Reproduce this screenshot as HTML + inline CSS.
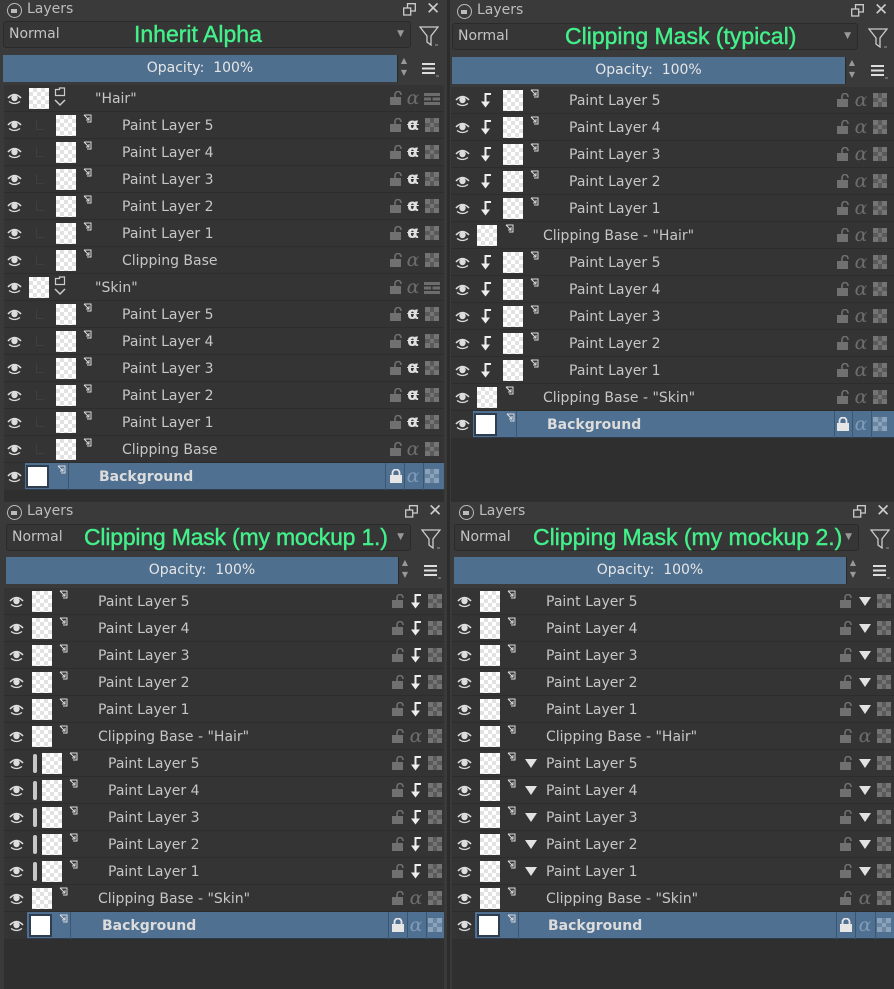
<!DOCTYPE html>
<html><head><meta charset="utf-8"><style>
*{box-sizing:border-box;margin:0;padding:0}
body{width:894px;height:989px;background:#2c2c2c;overflow:hidden;font-family:"DejaVu Sans","Liberation Sans",sans-serif;position:relative}
.p{position:absolute;background:#3a3a3a;overflow:hidden}
.hd{position:absolute;left:0;right:0;top:0;height:21px;color:#bdbdbd;font-size:14px}
.hd .lc{position:absolute;left:7px;top:3px;width:15px;height:15px;border:1.5px solid #bbb;border-radius:50%}
.hd .lc:after{content:"";position:absolute;left:3px;top:5px;width:6px;height:4px;background:#bbb}
.hd .ln{position:absolute;left:27px;top:1px}
.hd .fl{position:absolute;top:3px;width:13px;height:13px}
.hd .x{position:absolute;top:-1px;font-size:17px;color:#ccc}
.cb{position:absolute;height:27px;background:#363636;border:1px solid #2a2a2a;border-radius:3px;color:#c4c4c4;font-size:14px;line-height:25px;padding-left:5px}
.cb .dd{position:absolute;right:6px;top:0;font-size:9px;color:#999}
.gt{position:absolute;color:#43f08a;font-family:"Liberation Sans",sans-serif;font-size:23px;line-height:25px;top:0;-webkit-text-stroke:0.4px #43f08a}
.op{position:absolute;height:27px;background:#4f6f8f;color:#e6e6e6;font-size:14px;line-height:27px;text-align:center}
.sp{position:absolute;height:27px;width:13px;background:#3a3a3a;border-left:1px solid #2a2a2a;color:#999;font-size:8px;line-height:12px;text-align:center}
.ic{position:absolute;color:#ccc}
.ls{position:absolute;background:#2f2f2f}
.r{position:absolute;left:0;right:0;height:27px;background:#343434;border-bottom:1px solid #2d2d2d}
.r>*{position:absolute}
.e{top:7px;width:15px;height:13px}
.th{top:3px;width:20px;height:21px;background-color:#fff;background-image:linear-gradient(45deg,#e2e2e2 25%,transparent 25%,transparent 75%,#e2e2e2 75%),linear-gradient(45deg,#e2e2e2 25%,transparent 25%,transparent 75%,#e2e2e2 75%);background-size:8px 8px;background-position:0 0,4px 4px}
.cl{top:2px;width:10px;height:10px}
.tx{top:1px;line-height:26px;font-size:14px;color:#c6c6c6;white-space:nowrap}
.lk{top:6px;width:12px;height:14px}
.al{top:0;width:16px;line-height:26px;font-size:19px;font-style:italic;color:#6d6d6d;font-family:"DejaVu Serif",serif;text-align:center}
.ax{top:0;width:16px;line-height:26px;font-size:17px;font-weight:bold;color:#e0e0e0;text-align:center;text-decoration:line-through}
.ck{top:6px;width:14px;height:14px}
.hk{top:5px;width:12px;height:16px}
.tri{top:9px;width:12px;height:9px}
.fb{top:8px;width:8px;height:10px;border-left:1px solid #3f3f3f;border-bottom:1px solid #3f3f3f}
.bar{top:4px;width:4px;height:19px;background:#c8c8c8;border-radius:2px}
.sel{background:#4f7091;border-bottom-color:#2d3d4d}
.sel .tx{font-weight:bold;color:#dcdcdc}
.wt{top:2px;width:23px;height:23px;background:#fff;border:2px solid #2e3e50}
.dv{top:0;width:1px;height:27px;background:#3a5670}
.ebg{left:0;top:0;height:27px;background:#343434}
</style></head><body>
<svg width="0" height="0" style="position:absolute"><defs>
<symbol id="eye" viewBox="0 0 15 13"><path d="M1 6 Q7.5 -1 14 6" stroke="#ddd" stroke-width="1.6" fill="none"/><circle cx="7.5" cy="6" r="3.2" fill="#ddd"/><path d="M2 9.5 Q7.5 13.5 13 9.5" stroke="#ddd" stroke-width="1.3" fill="none"/></symbol>
<symbol id="clip" viewBox="0 0 10 10"><path d="M2 1H9V8H5M2 1L7 6M7 3V6H4" stroke="#ddd" stroke-width="1" fill="none"/></symbol>
<symbol id="lock" viewBox="0 0 12 14"><rect x="0" y="6" width="11" height="8" fill="#707070"/><path d="M5 6V3.5A3 3 0 0 1 11 3.5V4" stroke="#707070" stroke-width="1.6" fill="none"/></symbol>
<symbol id="lockc" viewBox="0 0 12 14"><rect x="0" y="6" width="12" height="8" fill="#e6e6e6"/><path d="M2.5 6V4A3.5 3.5 0 0 1 9.5 4V6" stroke="#e6e6e6" stroke-width="1.8" fill="none"/></symbol>
<symbol id="chk" viewBox="0 0 14 14"><rect width="14" height="14" fill="#5a5a5a"/><path d="M0 0h5v5H0zM9 0h5v5H9zM5 5h4v4H5zM0 9h5v5H0zM9 9h5v5H9z" fill="#747474"/></symbol>
<symbol id="chks" viewBox="0 0 14 14"><rect width="14" height="14" fill="#6a86a3"/><path d="M0 0h5v5H0zM9 0h5v5H9zM5 5h4v4H5zM0 9h5v5H0zM9 9h5v5H9z" fill="#8aa2ba"/></symbol>
<symbol id="grid" viewBox="0 0 16 12"><path d="M0 0h16v3H0zM0 4.5h7v3H0zM8.5 4.5h7.5v3H8.5zM0 9h16v3H0z" fill="#6d6d6d"/></symbol>
<symbol id="hook" viewBox="0 0 12 16"><path d="M11 2H5.5V11" stroke="#eee" stroke-width="2" fill="none"/><path d="M1 9.5H10L5.5 15.5Z" fill="#eee"/></symbol>
<symbol id="tri" viewBox="0 0 12 9"><path d="M0 0H12L6 9Z" fill="#e2e2e2"/></symbol>
<symbol id="grp" viewBox="0 0 12 22"><path d="M1.5 2.5h4v-1.5h5v7.5h-9z" stroke="#ccc" stroke-width="1.2" fill="none"/><path d="M1 13L6 18L11 13" stroke="#ccc" stroke-width="1.5" fill="none"/></symbol>
<symbol id="flt" viewBox="0 0 20 22"><path d="M1 2H19L12 11V20L8 17V11Z" stroke="#ccc" stroke-width="1.3" fill="none"/><path d="M16 20h3" stroke="#999"/></symbol>
<symbol id="mnu" viewBox="0 0 18 16"><path d="M1 3h13M1 7.5h13M1 12h13" stroke="#ddd" stroke-width="2"/><path d="M15 15h3" stroke="#999"/></symbol>
<symbol id="flo" viewBox="0 0 13 13"><rect x="0.7" y="5" width="7" height="7" stroke="#ccc" fill="none" stroke-width="1.3"/><path d="M4.5 5V0.7H12.3V8H7.7" stroke="#ccc" fill="none" stroke-width="1.3"/></symbol>
</defs></svg>

<!-- TOP LEFT -->
<div class="p" style="left:0;top:0;width:447px;height:502px">
<div class="hd"><div class="lc"></div><div class="ln">Layers</div><svg class="fl" style="left:403px"><use href="#flo"/></svg><span class="x" style="left:426px">✕</span></div>
<div class="cb" style="left:3px;top:21px;width:408px">Normal<span class="dd">▼</span><span class="gt" style="left:130px">Inherit Alpha</span></div>
<svg class="ic" style="left:419px;top:25px;width:20px;height:22px"><use href="#flt"/></svg>
<div class="op" style="left:3px;top:55px;width:394px">Opacity:&nbsp; 100%</div><div class="sp" style="left:397px;top:55px">▲<br>▼</div>
<svg class="ic" style="left:421px;top:61px;width:18px;height:16px"><use href="#mnu"/></svg>
<div class="ls" style="left:4px;top:85px;width:440px;height:417px">
<div class="r" style="top:0"><svg class="e" style="left:3px"><use href="#eye"/></svg><div class="th" style="left:25px"></div><svg style="left:50px;top:2px;width:12px;height:22px"><use href="#grp"/></svg><span class="tx" style="left:91px">"Hair"</span><svg class="lk" style="left:386px"><use href="#lock"/></svg><span class="al" style="left:401px">α</span><svg style="left:420px;top:8px;width:16px;height:12px;position:absolute"><use href="#grid"/></svg></div>
<div class="r" style="top:27px"><svg class="e" style="left:3px"><use href="#eye"/></svg><div class="fb" style="left:32px"></div><div class="th" style="left:52px"></div><svg class="cl" style="left:78px"><use href="#clip"/></svg><span class="tx" style="left:118px">Paint Layer 5</span><svg class="lk" style="left:386px"><use href="#lock"/></svg><span class="ax" style="left:401px">α</span><svg class="ck" style="left:421px"><use href="#chk"/></svg></div>
<div class="r" style="top:54px"><svg class="e" style="left:3px"><use href="#eye"/></svg><div class="fb" style="left:32px"></div><div class="th" style="left:52px"></div><svg class="cl" style="left:78px"><use href="#clip"/></svg><span class="tx" style="left:118px">Paint Layer 4</span><svg class="lk" style="left:386px"><use href="#lock"/></svg><span class="ax" style="left:401px">α</span><svg class="ck" style="left:421px"><use href="#chk"/></svg></div>
<div class="r" style="top:81px"><svg class="e" style="left:3px"><use href="#eye"/></svg><div class="fb" style="left:32px"></div><div class="th" style="left:52px"></div><svg class="cl" style="left:78px"><use href="#clip"/></svg><span class="tx" style="left:118px">Paint Layer 3</span><svg class="lk" style="left:386px"><use href="#lock"/></svg><span class="ax" style="left:401px">α</span><svg class="ck" style="left:421px"><use href="#chk"/></svg></div>
<div class="r" style="top:108px"><svg class="e" style="left:3px"><use href="#eye"/></svg><div class="fb" style="left:32px"></div><div class="th" style="left:52px"></div><svg class="cl" style="left:78px"><use href="#clip"/></svg><span class="tx" style="left:118px">Paint Layer 2</span><svg class="lk" style="left:386px"><use href="#lock"/></svg><span class="ax" style="left:401px">α</span><svg class="ck" style="left:421px"><use href="#chk"/></svg></div>
<div class="r" style="top:135px"><svg class="e" style="left:3px"><use href="#eye"/></svg><div class="fb" style="left:32px"></div><div class="th" style="left:52px"></div><svg class="cl" style="left:78px"><use href="#clip"/></svg><span class="tx" style="left:118px">Paint Layer 1</span><svg class="lk" style="left:386px"><use href="#lock"/></svg><span class="ax" style="left:401px">α</span><svg class="ck" style="left:421px"><use href="#chk"/></svg></div>
<div class="r" style="top:162px"><svg class="e" style="left:3px"><use href="#eye"/></svg><div class="fb" style="left:32px"></div><div class="th" style="left:52px"></div><svg class="cl" style="left:78px"><use href="#clip"/></svg><span class="tx" style="left:118px">Clipping Base</span><svg class="lk" style="left:386px"><use href="#lock"/></svg><span class="al" style="left:401px">α</span><svg class="ck" style="left:421px"><use href="#chk"/></svg></div>
<div class="r" style="top:189px"><svg class="e" style="left:3px"><use href="#eye"/></svg><div class="th" style="left:25px"></div><svg style="left:50px;top:2px;width:12px;height:22px"><use href="#grp"/></svg><span class="tx" style="left:91px">"Skin"</span><svg class="lk" style="left:386px"><use href="#lock"/></svg><span class="al" style="left:401px">α</span><svg style="left:420px;top:8px;width:16px;height:12px;position:absolute"><use href="#grid"/></svg></div>
<div class="r" style="top:216px"><svg class="e" style="left:3px"><use href="#eye"/></svg><div class="fb" style="left:32px"></div><div class="th" style="left:52px"></div><svg class="cl" style="left:78px"><use href="#clip"/></svg><span class="tx" style="left:118px">Paint Layer 5</span><svg class="lk" style="left:386px"><use href="#lock"/></svg><span class="ax" style="left:401px">α</span><svg class="ck" style="left:421px"><use href="#chk"/></svg></div>
<div class="r" style="top:243px"><svg class="e" style="left:3px"><use href="#eye"/></svg><div class="fb" style="left:32px"></div><div class="th" style="left:52px"></div><svg class="cl" style="left:78px"><use href="#clip"/></svg><span class="tx" style="left:118px">Paint Layer 4</span><svg class="lk" style="left:386px"><use href="#lock"/></svg><span class="ax" style="left:401px">α</span><svg class="ck" style="left:421px"><use href="#chk"/></svg></div>
<div class="r" style="top:270px"><svg class="e" style="left:3px"><use href="#eye"/></svg><div class="fb" style="left:32px"></div><div class="th" style="left:52px"></div><svg class="cl" style="left:78px"><use href="#clip"/></svg><span class="tx" style="left:118px">Paint Layer 3</span><svg class="lk" style="left:386px"><use href="#lock"/></svg><span class="ax" style="left:401px">α</span><svg class="ck" style="left:421px"><use href="#chk"/></svg></div>
<div class="r" style="top:297px"><svg class="e" style="left:3px"><use href="#eye"/></svg><div class="fb" style="left:32px"></div><div class="th" style="left:52px"></div><svg class="cl" style="left:78px"><use href="#clip"/></svg><span class="tx" style="left:118px">Paint Layer 2</span><svg class="lk" style="left:386px"><use href="#lock"/></svg><span class="ax" style="left:401px">α</span><svg class="ck" style="left:421px"><use href="#chk"/></svg></div>
<div class="r" style="top:324px"><svg class="e" style="left:3px"><use href="#eye"/></svg><div class="fb" style="left:32px"></div><div class="th" style="left:52px"></div><svg class="cl" style="left:78px"><use href="#clip"/></svg><span class="tx" style="left:118px">Paint Layer 1</span><svg class="lk" style="left:386px"><use href="#lock"/></svg><span class="ax" style="left:401px">α</span><svg class="ck" style="left:421px"><use href="#chk"/></svg></div>
<div class="r" style="top:351px"><svg class="e" style="left:3px"><use href="#eye"/></svg><div class="fb" style="left:32px"></div><div class="th" style="left:52px"></div><svg class="cl" style="left:78px"><use href="#clip"/></svg><span class="tx" style="left:118px">Clipping Base</span><svg class="lk" style="left:386px"><use href="#lock"/></svg><span class="al" style="left:401px">α</span><svg class="ck" style="left:421px"><use href="#chk"/></svg></div>
<div class="r sel" style="top:378px"><div class="ebg" style="width:21px"></div><svg class="e" style="left:3px"><use href="#eye"/></svg><div class="wt" style="left:22px"></div><svg class="cl" style="left:52px"><use href="#clip"/></svg><div class="dv" style="left:64px"></div><span class="tx" style="left:95px">Background</span><div class="dv" style="left:381px"></div><svg class="lk" style="left:386px"><use href="#lockc"/></svg><div class="dv" style="left:400px"></div><span class="al" style="left:401px;color:#7f9bb7">α</span><div class="dv" style="left:419px"></div><svg class="ck" style="left:421px"><use href="#chks"/></svg></div>
</div>
</div>

<!-- TOP RIGHT -->
<div class="p" style="left:450px;top:0;width:444px;height:502px">
<div class="hd" style="top:1px"><div class="lc"></div><div class="ln">Layers</div><svg class="fl" style="left:401px"><use href="#flo"/></svg><span class="x" style="left:424px">✕</span></div>
<div class="cb" style="left:2px;top:23px;width:406px">Normal<span class="dd">▼</span><span class="gt" style="left:112px">Clipping Mask (typical)</span></div>
<svg class="ic" style="left:418px;top:27px;width:20px;height:22px"><use href="#flt"/></svg>
<div class="op" style="left:2px;top:57px;width:393px">Opacity:&nbsp; 100%</div><div class="sp" style="left:395px;top:57px">▲<br>▼</div>
<svg class="ic" style="left:420px;top:63px;width:18px;height:16px"><use href="#mnu"/></svg>
<div class="ls" style="left:1px;top:87px;width:443px;height:415px">
<div class="r" style="top:0"><svg class="e" style="left:4px"><use href="#eye"/></svg><svg class="hk" style="left:29px"><use href="#hook"/></svg><div class="th" style="left:52px"></div><svg class="cl" style="left:78px"><use href="#clip"/></svg><span class="tx" style="left:118px">Paint Layer 5</span><svg class="lk" style="left:386px"><use href="#lock"/></svg><span class="al" style="left:402px">α</span><svg class="ck" style="left:422px"><use href="#chk"/></svg></div>
<div class="r" style="top:27px"><svg class="e" style="left:4px"><use href="#eye"/></svg><svg class="hk" style="left:29px"><use href="#hook"/></svg><div class="th" style="left:52px"></div><svg class="cl" style="left:78px"><use href="#clip"/></svg><span class="tx" style="left:118px">Paint Layer 4</span><svg class="lk" style="left:386px"><use href="#lock"/></svg><span class="al" style="left:402px">α</span><svg class="ck" style="left:422px"><use href="#chk"/></svg></div>
<div class="r" style="top:54px"><svg class="e" style="left:4px"><use href="#eye"/></svg><svg class="hk" style="left:29px"><use href="#hook"/></svg><div class="th" style="left:52px"></div><svg class="cl" style="left:78px"><use href="#clip"/></svg><span class="tx" style="left:118px">Paint Layer 3</span><svg class="lk" style="left:386px"><use href="#lock"/></svg><span class="al" style="left:402px">α</span><svg class="ck" style="left:422px"><use href="#chk"/></svg></div>
<div class="r" style="top:81px"><svg class="e" style="left:4px"><use href="#eye"/></svg><svg class="hk" style="left:29px"><use href="#hook"/></svg><div class="th" style="left:52px"></div><svg class="cl" style="left:78px"><use href="#clip"/></svg><span class="tx" style="left:118px">Paint Layer 2</span><svg class="lk" style="left:386px"><use href="#lock"/></svg><span class="al" style="left:402px">α</span><svg class="ck" style="left:422px"><use href="#chk"/></svg></div>
<div class="r" style="top:108px"><svg class="e" style="left:4px"><use href="#eye"/></svg><svg class="hk" style="left:29px"><use href="#hook"/></svg><div class="th" style="left:52px"></div><svg class="cl" style="left:78px"><use href="#clip"/></svg><span class="tx" style="left:118px">Paint Layer 1</span><svg class="lk" style="left:386px"><use href="#lock"/></svg><span class="al" style="left:402px">α</span><svg class="ck" style="left:422px"><use href="#chk"/></svg></div>
<div class="r" style="top:135px"><svg class="e" style="left:4px"><use href="#eye"/></svg><div class="th" style="left:26px"></div><svg class="cl" style="left:53px"><use href="#clip"/></svg><span class="tx" style="left:92px">Clipping Base - "Hair"</span><svg class="lk" style="left:386px"><use href="#lock"/></svg><span class="al" style="left:402px">α</span><svg class="ck" style="left:422px"><use href="#chk"/></svg></div>
<div class="r" style="top:162px"><svg class="e" style="left:4px"><use href="#eye"/></svg><svg class="hk" style="left:29px"><use href="#hook"/></svg><div class="th" style="left:52px"></div><svg class="cl" style="left:78px"><use href="#clip"/></svg><span class="tx" style="left:118px">Paint Layer 5</span><svg class="lk" style="left:386px"><use href="#lock"/></svg><span class="al" style="left:402px">α</span><svg class="ck" style="left:422px"><use href="#chk"/></svg></div>
<div class="r" style="top:189px"><svg class="e" style="left:4px"><use href="#eye"/></svg><svg class="hk" style="left:29px"><use href="#hook"/></svg><div class="th" style="left:52px"></div><svg class="cl" style="left:78px"><use href="#clip"/></svg><span class="tx" style="left:118px">Paint Layer 4</span><svg class="lk" style="left:386px"><use href="#lock"/></svg><span class="al" style="left:402px">α</span><svg class="ck" style="left:422px"><use href="#chk"/></svg></div>
<div class="r" style="top:216px"><svg class="e" style="left:4px"><use href="#eye"/></svg><svg class="hk" style="left:29px"><use href="#hook"/></svg><div class="th" style="left:52px"></div><svg class="cl" style="left:78px"><use href="#clip"/></svg><span class="tx" style="left:118px">Paint Layer 3</span><svg class="lk" style="left:386px"><use href="#lock"/></svg><span class="al" style="left:402px">α</span><svg class="ck" style="left:422px"><use href="#chk"/></svg></div>
<div class="r" style="top:243px"><svg class="e" style="left:4px"><use href="#eye"/></svg><svg class="hk" style="left:29px"><use href="#hook"/></svg><div class="th" style="left:52px"></div><svg class="cl" style="left:78px"><use href="#clip"/></svg><span class="tx" style="left:118px">Paint Layer 2</span><svg class="lk" style="left:386px"><use href="#lock"/></svg><span class="al" style="left:402px">α</span><svg class="ck" style="left:422px"><use href="#chk"/></svg></div>
<div class="r" style="top:270px"><svg class="e" style="left:4px"><use href="#eye"/></svg><svg class="hk" style="left:29px"><use href="#hook"/></svg><div class="th" style="left:52px"></div><svg class="cl" style="left:78px"><use href="#clip"/></svg><span class="tx" style="left:118px">Paint Layer 1</span><svg class="lk" style="left:386px"><use href="#lock"/></svg><span class="al" style="left:402px">α</span><svg class="ck" style="left:422px"><use href="#chk"/></svg></div>
<div class="r" style="top:297px"><svg class="e" style="left:4px"><use href="#eye"/></svg><div class="th" style="left:26px"></div><svg class="cl" style="left:53px"><use href="#clip"/></svg><span class="tx" style="left:92px">Clipping Base - "Skin"</span><svg class="lk" style="left:386px"><use href="#lock"/></svg><span class="al" style="left:402px">α</span><svg class="ck" style="left:422px"><use href="#chk"/></svg></div>
<div class="r sel" style="top:324px"><div class="ebg" style="width:22px"></div><svg class="e" style="left:4px"><use href="#eye"/></svg><div class="wt" style="left:23px"></div><svg class="cl" style="left:54px"><use href="#clip"/></svg><div class="dv" style="left:65px"></div><span class="tx" style="left:96px">Background</span><div class="dv" style="left:383px"></div><svg class="lk" style="left:386px"><use href="#lockc"/></svg><div class="dv" style="left:401px"></div><span class="al" style="left:402px;color:#7f9bb7">α</span><div class="dv" style="left:420px"></div><svg class="ck" style="left:422px"><use href="#chks"/></svg></div>
</div>
</div>

<!-- BOTTOM LEFT -->
<div class="p" style="left:0;top:502px;width:447px;height:487px">
<div class="hd"><div class="lc"></div><div class="ln">Layers</div><svg class="fl" style="left:405px"><use href="#flo"/></svg><span class="x" style="left:428px">✕</span></div>
<div class="cb" style="left:6px;top:22px;width:405px">Normal<span class="dd">▼</span><span class="gt" style="left:77px;letter-spacing:-0.2px">Clipping Mask (my mockup 1.)</span></div>
<svg class="ic" style="left:421px;top:26px;width:20px;height:22px"><use href="#flt"/></svg>
<div class="op" style="left:6px;top:55px;width:392px">Opacity:&nbsp; 100%</div><div class="sp" style="left:398px;top:55px">▲<br>▼</div>
<svg class="ic" style="left:423px;top:61px;width:18px;height:16px"><use href="#mnu"/></svg>
<div class="ls" style="left:4px;top:86px;width:440px;height:401px">
<div class="r" style="top:0"><svg class="e" style="left:5px"><use href="#eye"/></svg><div class="th" style="left:28px"></div><svg class="cl" style="left:54px"><use href="#clip"/></svg><span class="tx" style="left:94px">Paint Layer 5</span><svg class="lk" style="left:388px"><use href="#lock"/></svg><svg class="hk" style="left:406px"><use href="#hook"/></svg><svg class="ck" style="left:424px"><use href="#chk"/></svg></div>
<div class="r" style="top:27px"><svg class="e" style="left:5px"><use href="#eye"/></svg><div class="th" style="left:28px"></div><svg class="cl" style="left:54px"><use href="#clip"/></svg><span class="tx" style="left:94px">Paint Layer 4</span><svg class="lk" style="left:388px"><use href="#lock"/></svg><svg class="hk" style="left:406px"><use href="#hook"/></svg><svg class="ck" style="left:424px"><use href="#chk"/></svg></div>
<div class="r" style="top:54px"><svg class="e" style="left:5px"><use href="#eye"/></svg><div class="th" style="left:28px"></div><svg class="cl" style="left:54px"><use href="#clip"/></svg><span class="tx" style="left:94px">Paint Layer 3</span><svg class="lk" style="left:388px"><use href="#lock"/></svg><svg class="hk" style="left:406px"><use href="#hook"/></svg><svg class="ck" style="left:424px"><use href="#chk"/></svg></div>
<div class="r" style="top:81px"><svg class="e" style="left:5px"><use href="#eye"/></svg><div class="th" style="left:28px"></div><svg class="cl" style="left:54px"><use href="#clip"/></svg><span class="tx" style="left:94px">Paint Layer 2</span><svg class="lk" style="left:388px"><use href="#lock"/></svg><svg class="hk" style="left:406px"><use href="#hook"/></svg><svg class="ck" style="left:424px"><use href="#chk"/></svg></div>
<div class="r" style="top:108px"><svg class="e" style="left:5px"><use href="#eye"/></svg><div class="th" style="left:28px"></div><svg class="cl" style="left:54px"><use href="#clip"/></svg><span class="tx" style="left:94px">Paint Layer 1</span><svg class="lk" style="left:388px"><use href="#lock"/></svg><svg class="hk" style="left:406px"><use href="#hook"/></svg><svg class="ck" style="left:424px"><use href="#chk"/></svg></div>
<div class="r" style="top:135px"><svg class="e" style="left:5px"><use href="#eye"/></svg><div class="th" style="left:28px"></div><svg class="cl" style="left:54px"><use href="#clip"/></svg><span class="tx" style="left:94px">Clipping Base - "Hair"</span><svg class="lk" style="left:388px"><use href="#lock"/></svg><span class="al" style="left:404px">α</span><svg class="ck" style="left:424px"><use href="#chk"/></svg></div>
<div class="r" style="top:162px"><svg class="e" style="left:5px"><use href="#eye"/></svg><div class="bar" style="left:29px"></div><div class="th" style="left:38px"></div><svg class="cl" style="left:64px"><use href="#clip"/></svg><span class="tx" style="left:104px">Paint Layer 5</span><svg class="lk" style="left:388px"><use href="#lock"/></svg><svg class="hk" style="left:406px"><use href="#hook"/></svg><svg class="ck" style="left:424px"><use href="#chk"/></svg></div>
<div class="r" style="top:189px"><svg class="e" style="left:5px"><use href="#eye"/></svg><div class="bar" style="left:29px"></div><div class="th" style="left:38px"></div><svg class="cl" style="left:64px"><use href="#clip"/></svg><span class="tx" style="left:104px">Paint Layer 4</span><svg class="lk" style="left:388px"><use href="#lock"/></svg><svg class="hk" style="left:406px"><use href="#hook"/></svg><svg class="ck" style="left:424px"><use href="#chk"/></svg></div>
<div class="r" style="top:216px"><svg class="e" style="left:5px"><use href="#eye"/></svg><div class="bar" style="left:29px"></div><div class="th" style="left:38px"></div><svg class="cl" style="left:64px"><use href="#clip"/></svg><span class="tx" style="left:104px">Paint Layer 3</span><svg class="lk" style="left:388px"><use href="#lock"/></svg><svg class="hk" style="left:406px"><use href="#hook"/></svg><svg class="ck" style="left:424px"><use href="#chk"/></svg></div>
<div class="r" style="top:243px"><svg class="e" style="left:5px"><use href="#eye"/></svg><div class="bar" style="left:29px"></div><div class="th" style="left:38px"></div><svg class="cl" style="left:64px"><use href="#clip"/></svg><span class="tx" style="left:104px">Paint Layer 2</span><svg class="lk" style="left:388px"><use href="#lock"/></svg><svg class="hk" style="left:406px"><use href="#hook"/></svg><svg class="ck" style="left:424px"><use href="#chk"/></svg></div>
<div class="r" style="top:270px"><svg class="e" style="left:5px"><use href="#eye"/></svg><div class="bar" style="left:29px"></div><div class="th" style="left:38px"></div><svg class="cl" style="left:64px"><use href="#clip"/></svg><span class="tx" style="left:104px">Paint Layer 1</span><svg class="lk" style="left:388px"><use href="#lock"/></svg><svg class="hk" style="left:406px"><use href="#hook"/></svg><svg class="ck" style="left:424px"><use href="#chk"/></svg></div>
<div class="r" style="top:297px"><svg class="e" style="left:5px"><use href="#eye"/></svg><div class="th" style="left:28px"></div><svg class="cl" style="left:54px"><use href="#clip"/></svg><span class="tx" style="left:94px">Clipping Base - "Skin"</span><svg class="lk" style="left:388px"><use href="#lock"/></svg><span class="al" style="left:404px">α</span><svg class="ck" style="left:424px"><use href="#chk"/></svg></div>
<div class="r sel" style="top:324px"><div class="ebg" style="width:23px"></div><svg class="e" style="left:5px"><use href="#eye"/></svg><div class="wt" style="left:25px"></div><svg class="cl" style="left:54px"><use href="#clip"/></svg><div class="dv" style="left:66px"></div><span class="tx" style="left:98px">Background</span><div class="dv" style="left:384px"></div><svg class="lk" style="left:388px"><use href="#lockc"/></svg><div class="dv" style="left:403px"></div><span class="al" style="left:404px;color:#7f9bb7">α</span><div class="dv" style="left:422px"></div><svg class="ck" style="left:424px"><use href="#chks"/></svg></div>
</div>
</div>

<!-- BOTTOM RIGHT -->
<div class="p" style="left:450px;top:502px;width:444px;height:487px">
<div class="hd"><div class="lc" style="left:9px"></div><div class="ln" style="left:29px">Layers</div><svg class="fl" style="left:403px"><use href="#flo"/></svg><span class="x" style="left:426px">✕</span></div>
<div class="cb" style="left:4px;top:22px;width:405px">Normal<span class="dd">▼</span><span class="gt" style="left:78px">Clipping Mask (my mockup 2.)</span></div>
<svg class="ic" style="left:420px;top:26px;width:20px;height:22px"><use href="#flt"/></svg>
<div class="op" style="left:4px;top:55px;width:392px">Opacity:&nbsp; 100%</div><div class="sp" style="left:396px;top:55px">▲<br>▼</div>
<svg class="ic" style="left:422px;top:61px;width:18px;height:16px"><use href="#mnu"/></svg>
<div class="ls" style="left:2px;top:86px;width:442px;height:401px">
<div class="r" style="top:0"><svg class="e" style="left:5px"><use href="#eye"/></svg><div class="th" style="left:28px"></div><svg class="cl" style="left:54px"><use href="#clip"/></svg><span class="tx" style="left:94px">Paint Layer 5</span><svg class="lk" style="left:388px"><use href="#lock"/></svg><svg class="tri" style="left:407px"><use href="#tri"/></svg><svg class="ck" style="left:425px"><use href="#chk"/></svg></div>
<div class="r" style="top:27px"><svg class="e" style="left:5px"><use href="#eye"/></svg><div class="th" style="left:28px"></div><svg class="cl" style="left:54px"><use href="#clip"/></svg><span class="tx" style="left:94px">Paint Layer 4</span><svg class="lk" style="left:388px"><use href="#lock"/></svg><svg class="tri" style="left:407px"><use href="#tri"/></svg><svg class="ck" style="left:425px"><use href="#chk"/></svg></div>
<div class="r" style="top:54px"><svg class="e" style="left:5px"><use href="#eye"/></svg><div class="th" style="left:28px"></div><svg class="cl" style="left:54px"><use href="#clip"/></svg><span class="tx" style="left:94px">Paint Layer 3</span><svg class="lk" style="left:388px"><use href="#lock"/></svg><svg class="tri" style="left:407px"><use href="#tri"/></svg><svg class="ck" style="left:425px"><use href="#chk"/></svg></div>
<div class="r" style="top:81px"><svg class="e" style="left:5px"><use href="#eye"/></svg><div class="th" style="left:28px"></div><svg class="cl" style="left:54px"><use href="#clip"/></svg><span class="tx" style="left:94px">Paint Layer 2</span><svg class="lk" style="left:388px"><use href="#lock"/></svg><svg class="tri" style="left:407px"><use href="#tri"/></svg><svg class="ck" style="left:425px"><use href="#chk"/></svg></div>
<div class="r" style="top:108px"><svg class="e" style="left:5px"><use href="#eye"/></svg><div class="th" style="left:28px"></div><svg class="cl" style="left:54px"><use href="#clip"/></svg><span class="tx" style="left:94px">Paint Layer 1</span><svg class="lk" style="left:388px"><use href="#lock"/></svg><svg class="tri" style="left:407px"><use href="#tri"/></svg><svg class="ck" style="left:425px"><use href="#chk"/></svg></div>
<div class="r" style="top:135px"><svg class="e" style="left:5px"><use href="#eye"/></svg><div class="th" style="left:28px"></div><svg class="cl" style="left:54px"><use href="#clip"/></svg><span class="tx" style="left:94px">Clipping Base - "Hair"</span><svg class="lk" style="left:388px"><use href="#lock"/></svg><span class="al" style="left:405px">α</span><svg class="ck" style="left:425px"><use href="#chk"/></svg></div>
<div class="r" style="top:162px"><svg class="e" style="left:5px"><use href="#eye"/></svg><div class="th" style="left:28px"></div><svg class="cl" style="left:54px"><use href="#clip"/></svg><svg class="tri" style="left:73px"><use href="#tri"/></svg><span class="tx" style="left:94px">Paint Layer 5</span><svg class="lk" style="left:388px"><use href="#lock"/></svg><svg class="tri" style="left:407px"><use href="#tri"/></svg><svg class="ck" style="left:425px"><use href="#chk"/></svg></div>
<div class="r" style="top:189px"><svg class="e" style="left:5px"><use href="#eye"/></svg><div class="th" style="left:28px"></div><svg class="cl" style="left:54px"><use href="#clip"/></svg><svg class="tri" style="left:73px"><use href="#tri"/></svg><span class="tx" style="left:94px">Paint Layer 4</span><svg class="lk" style="left:388px"><use href="#lock"/></svg><svg class="tri" style="left:407px"><use href="#tri"/></svg><svg class="ck" style="left:425px"><use href="#chk"/></svg></div>
<div class="r" style="top:216px"><svg class="e" style="left:5px"><use href="#eye"/></svg><div class="th" style="left:28px"></div><svg class="cl" style="left:54px"><use href="#clip"/></svg><svg class="tri" style="left:73px"><use href="#tri"/></svg><span class="tx" style="left:94px">Paint Layer 3</span><svg class="lk" style="left:388px"><use href="#lock"/></svg><svg class="tri" style="left:407px"><use href="#tri"/></svg><svg class="ck" style="left:425px"><use href="#chk"/></svg></div>
<div class="r" style="top:243px"><svg class="e" style="left:5px"><use href="#eye"/></svg><div class="th" style="left:28px"></div><svg class="cl" style="left:54px"><use href="#clip"/></svg><svg class="tri" style="left:73px"><use href="#tri"/></svg><span class="tx" style="left:94px">Paint Layer 2</span><svg class="lk" style="left:388px"><use href="#lock"/></svg><svg class="tri" style="left:407px"><use href="#tri"/></svg><svg class="ck" style="left:425px"><use href="#chk"/></svg></div>
<div class="r" style="top:270px"><svg class="e" style="left:5px"><use href="#eye"/></svg><div class="th" style="left:28px"></div><svg class="cl" style="left:54px"><use href="#clip"/></svg><svg class="tri" style="left:73px"><use href="#tri"/></svg><span class="tx" style="left:94px">Paint Layer 1</span><svg class="lk" style="left:388px"><use href="#lock"/></svg><svg class="tri" style="left:407px"><use href="#tri"/></svg><svg class="ck" style="left:425px"><use href="#chk"/></svg></div>
<div class="r" style="top:297px"><svg class="e" style="left:5px"><use href="#eye"/></svg><div class="th" style="left:28px"></div><svg class="cl" style="left:54px"><use href="#clip"/></svg><span class="tx" style="left:94px">Clipping Base - "Skin"</span><svg class="lk" style="left:388px"><use href="#lock"/></svg><span class="al" style="left:405px">α</span><svg class="ck" style="left:425px"><use href="#chk"/></svg></div>
<div class="r sel" style="top:324px"><div class="ebg" style="width:23px"></div><svg class="e" style="left:5px"><use href="#eye"/></svg><div class="wt" style="left:25px"></div><svg class="cl" style="left:54px"><use href="#clip"/></svg><div class="dv" style="left:66px"></div><span class="tx" style="left:96px">Background</span><div class="dv" style="left:384px"></div><svg class="lk" style="left:388px"><use href="#lockc"/></svg><div class="dv" style="left:403px"></div><span class="al" style="left:405px;color:#7f9bb7">α</span><div class="dv" style="left:423px"></div><svg class="ck" style="left:425px"><use href="#chks"/></svg></div>
</div>
</div>
</body></html>
